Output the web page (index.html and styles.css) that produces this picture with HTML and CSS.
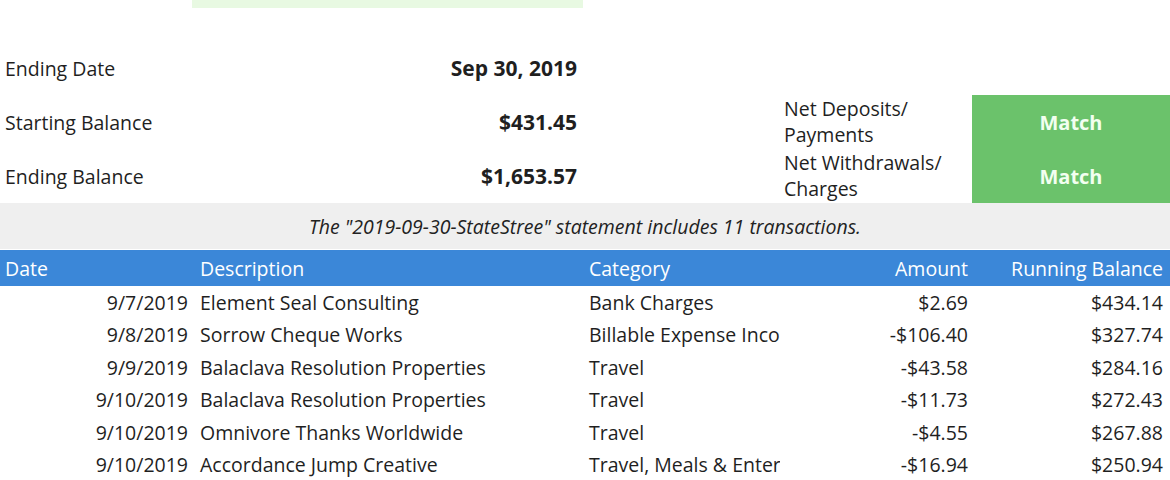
FILE: index.html
```html
<!DOCTYPE html>
<html>
<head>
<meta charset="utf-8">
<link rel="stylesheet" href="styles.css">
</head>
<body>
<div class="page">
  <div class="topstrip">
    <div class="top-label"></div>
    <div class="top-input"></div>
  </div>
  <div class="summary">
    <div class="lbl">Ending Date</div>
    <div class="val">Sep 30, 2019</div>
    <div class="blank"></div>
    <div class="lbl2"></div>
    <div class="nobox"></div>

    <div class="lbl">Starting Balance</div>
    <div class="val">$431.45</div>
    <div class="blank"></div>
    <div class="lbl2">Net Deposits/<br>Payments</div>
    <div class="match">Match</div>

    <div class="lbl">Ending Balance</div>
    <div class="val">$1,653.57</div>
    <div class="blank"></div>
    <div class="lbl2">Net Withdrawals/<br>Charges</div>
    <div class="match">Match</div>
  </div>
  <div class="note">The "2019-09-30-StateStree" statement includes 11 transactions.</div>
  <div class="table">
    <div class="row head">
      <div class="c-date">Date</div>
      <div class="c-desc">Description</div>
      <div class="c-cat">Category</div>
      <div class="c-amt">Amount</div>
      <div class="c-bal">Running Balance</div>
    </div>
    <div class="row">
      <div class="c-date">9/7/2019</div>
      <div class="c-desc">Element Seal Consulting</div>
      <div class="c-cat">Bank Charges</div>
      <div class="c-amt">$2.69</div>
      <div class="c-bal">$434.14</div>
    </div>
    <div class="row">
      <div class="c-date">9/8/2019</div>
      <div class="c-desc">Sorrow Cheque Works</div>
      <div class="c-cat">Billable Expense Inco</div>
      <div class="c-amt">-$106.40</div>
      <div class="c-bal">$327.74</div>
    </div>
    <div class="row">
      <div class="c-date">9/9/2019</div>
      <div class="c-desc">Balaclava Resolution Properties</div>
      <div class="c-cat">Travel</div>
      <div class="c-amt">-$43.58</div>
      <div class="c-bal">$284.16</div>
    </div>
    <div class="row">
      <div class="c-date">9/10/2019</div>
      <div class="c-desc">Balaclava Resolution Properties</div>
      <div class="c-cat">Travel</div>
      <div class="c-amt">-$11.73</div>
      <div class="c-bal">$272.43</div>
    </div>
    <div class="row">
      <div class="c-date">9/10/2019</div>
      <div class="c-desc">Omnivore Thanks Worldwide</div>
      <div class="c-cat">Travel</div>
      <div class="c-amt">-$4.55</div>
      <div class="c-bal">$267.88</div>
    </div>
    <div class="row">
      <div class="c-date">9/10/2019</div>
      <div class="c-desc">Accordance Jump Creative</div>
      <div class="c-cat">Travel, Meals &amp; Enter</div>
      <div class="c-amt">-$16.94</div>
      <div class="c-bal">$250.94</div>
    </div>
  </div>
</div>
</body>
</html>
```

FILE: styles.css
```css
html, body {
  margin: 0;
  padding: 0;
  background: #ffffff;
}
body {
  font-family: "Open Sans", "Liberation Sans", sans-serif;
  color: #1f1f1f;
  font-size: 19.5px;
}
.page {
  width: 1170px;
  height: 480px;
  overflow: hidden;
}
.topstrip {
  display: grid;
  grid-template-columns: 192px 391px 1fr;
  height: 8px;
}
.top-input {
  background: #e8f9e2;
}
.summary {
  display: grid;
  grid-template-columns: 192px 391px 201px 188px 198px;
  grid-auto-rows: 54px;
  margin-top: 33px;
}
.lbl {
  display: flex;
  align-items: center;
  padding-left: 5px;
}
.val {
  display: flex;
  align-items: center;
  justify-content: flex-end;
  padding-right: 6px;
  font-weight: bold;
  font-size: 21px;
}
.lbl2 {
  display: flex;
  align-items: center;
  line-height: 26px;
}
.match {
  display: flex;
  align-items: center;
  justify-content: center;
  background: #6bc26b;
  color: #f2fff0;
  font-weight: bold;
  font-size: 20px;
}
.note {
  background: #efefef;
  height: 46px;
  display: flex;
  align-items: center;
  justify-content: center;
  font-style: italic;
  font-size: 19.5px;
  color: #222;
}
.table {
  margin-top: 1px;
}
.row {
  display: grid;
  grid-template-columns: 192px 391px 197px 195px 195px;
  height: 32.5px;
  align-items: center;
  white-space: nowrap;
}
.row.head {
  background: #3b87d8;
  color: #ffffff;
  height: 36px;
}
.c-date {
  text-align: right;
  padding-right: 4px;
}
.head .c-date {
  text-align: left;
  padding-left: 5px;
}
.c-desc {
  padding-left: 8px;
}
.c-cat {
  padding-left: 6px;
  overflow: hidden;
}
.c-amt {
  text-align: right;
  padding-right: 7px;
}
.c-bal {
  text-align: right;
  padding-right: 7px;
}
```
